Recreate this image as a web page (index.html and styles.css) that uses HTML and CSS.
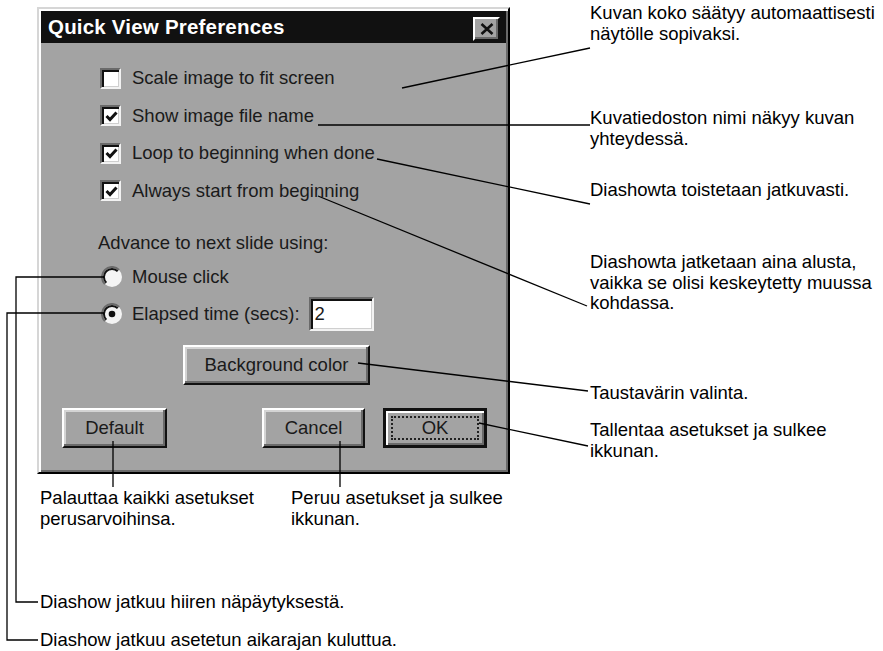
FILE: index.html
```html
<!DOCTYPE html>
<html lang="fi">

<head>
    <meta charset="UTF-8">
    <meta name="viewport" content="width=device-width, initial-scale=1.0">
    <title>Quick View Preferences</title>
    <link rel="stylesheet" href="styles.css">
</head>

<body>
    <div class="sheet">
        <div class="top">
            <div class="dialog">
                <div class="titlebar">
                    <span class="title">Quick View Preferences</span>
                    <span class="close">
                        <svg width="14" height="12" viewBox="0 0 14 12">
                            <path d="M1.5 1 L12.5 11 M12.5 1 L1.5 11" stroke="#111" stroke-width="2.6" fill="none" />
                        </svg>
                    </span>
                </div>

                <div class="panel">
                    <div class="checks">
                        <div class="row"><span class="box"></span>Scale image to fit screen</div>
                        <div class="row"><span class="box checked"><svg width="15" height="15" viewBox="0 0 15 15"><path d="M2.5 7 L6 10.5 L12.5 3.5" stroke="#111" stroke-width="3" fill="none" /></svg></span>Show image file name</div>
                        <div class="row"><span class="box checked"><svg width="15" height="15" viewBox="0 0 15 15"><path d="M2.5 7 L6 10.5 L12.5 3.5" stroke="#111" stroke-width="3" fill="none" /></svg></span>Loop to beginning when done</div>
                        <div class="row"><span class="box checked"><svg width="15" height="15" viewBox="0 0 15 15"><path d="M2.5 7 L6 10.5 L12.5 3.5" stroke="#111" stroke-width="3" fill="none" /></svg></span>Always start from beginning</div>
                    </div>

                    <p class="advance">Advance to next slide using:</p>

                    <div class="radios">
                        <div class="row">
                            <svg class="radio" width="22" height="22" viewBox="0 0 22 22">
                                <circle cx="11" cy="11" r="10" fill="#f4f4f4" />
                                <path d="M3.9 18.1 A10 10 0 0 1 18.1 3.9" stroke="#6a6a6a" stroke-width="2" fill="none" />
                                <path d="M5.3 16.7 A8 8 0 0 1 16.7 5.3" stroke="#111" stroke-width="2" fill="none" />
                            </svg>
                            Mouse click
                        </div>
                        <div class="row tall">
                            <svg class="radio" width="22" height="22" viewBox="0 0 22 22">
                                <circle cx="11" cy="11" r="10" fill="#f4f4f4" />
                                <path d="M3.9 18.1 A10 10 0 0 1 18.1 3.9" stroke="#6a6a6a" stroke-width="2" fill="none" />
                                <path d="M5.3 16.7 A8 8 0 0 1 16.7 5.3" stroke="#111" stroke-width="2" fill="none" />
                                <circle cx="11" cy="11" r="3.3" fill="#111" />
                            </svg>
                            Elapsed time (secs):
                            <span class="field">2</span>
                        </div>
                    </div>

                    <div class="btn bg-btn">Background color</div>

                    <div class="buttons">
                        <div class="btn default">Default</div>
                        <div class="btn cancel">Cancel</div>
                        <div class="btn ok"><span class="focus">OK</span></div>
                    </div>
                </div>
            </div>

            <div class="notes">
                <p class="note n1">Kuvan koko säätyy automaattisesti<br>näytölle sopivaksi.</p>
                <p class="note n2">Kuvatiedoston nimi näkyy kuvan<br>yhteydessä.</p>
                <p class="note n3">Diashowta toistetaan jatkuvasti.</p>
                <p class="note n4">Diashowta jatketaan aina alusta,<br>vaikka se olisi keskeytetty muussa<br>kohdassa.</p>
                <p class="note n5">Taustavärin valinta.</p>
                <p class="note n6">Tallentaa asetukset ja sulkee<br>ikkunan.</p>
            </div>
        </div>

        <div class="under">
            <p class="note reset-note">Palauttaa kaikki asetukset<br>perusarvoihinsa.</p>
            <p class="note">Peruu asetukset ja sulkee<br>ikkunan.</p>
        </div>

        <div class="foot">
            <p class="note">Diashow jatkuu hiiren näpäytyksestä.</p>
            <p class="note last">Diashow jatkuu asetetun aikarajan kuluttua.</p>
        </div>

        <!-- callout lines -->
        <svg class="leaders" width="883" height="651" viewBox="0 0 883 651">
            <path d="M402 88 L590 48" />
            <path d="M318 125 H590" />
            <path d="M377 159 L590 204" />
            <path d="M318 196 L587 306" />
            <path d="M358 363 L588 391" />
            <path d="M479 423 L588 446" />
            <path d="M113 441 V487" />
            <path d="M340 441 V487" />
            <path d="M104 277 H16 V602 H38" />
            <path d="M104 313 H7 V640 H38" />
        </svg>
    </div>
</body>

</html>
```

FILE: styles.css
```css
* {
    box-sizing: border-box;
    margin: 0;
    padding: 0;
}

body {
    background-color: #fff;
    font-family: "Liberation Sans", Arial, sans-serif;
    color: #111;
}

.sheet {
    position: relative;
    width: 883px;
    height: 651px;
    overflow: hidden;
}

.top {
    display: flex;
    align-items: flex-start;
}

/* the dialog window */
.dialog {
    display: flex;
    flex-direction: column;
    width: 473px;
    height: 467px;
    margin: 7px 0 0 37px;
    padding: 2px;
    background-color: #a3a3a3;
    border: 2px solid;
    border-color: #d6d6d6 #000 #000 #d6d6d6;
    box-shadow: inset 2px 2px 0 #fff, inset -2px -2px 0 #6a6a6a;
}

.titlebar {
    display: flex;
    align-items: center;
    justify-content: space-between;
    height: 32px;
    padding: 0 6px 0 7px;
    background-color: #111;
}

.title {
    color: #fff;
    font-weight: bold;
    font-size: 20.5px;
    letter-spacing: 0.2px;
}

.close {
    display: flex;
    align-items: center;
    justify-content: center;
    width: 27px;
    height: 24px;
    margin-top: 4px;
    background-color: #a3a3a3;
    border: 2px solid;
    border-color: #fff #111 #111 #fff;
    box-shadow: inset -2px -2px 0 #6a6a6a;
}

.panel {
    flex: 1;
    display: flex;
    flex-direction: column;
    padding-top: 23px;
    font-size: 18.5px;
    color: #1a1a1a;
}

.row {
    display: flex;
    align-items: center;
    height: 24px;
    white-space: nowrap;
}

.checks {
    display: flex;
    flex-direction: column;
    gap: 13.5px;
    padding-left: 59px;
}

.box {
    display: flex;
    align-items: center;
    justify-content: center;
    width: 21px;
    height: 21px;
    margin-right: 11px;
    background-color: #fff;
    border: 2px solid;
    border-color: #6a6a6a #f2f2f2 #f2f2f2 #6a6a6a;
    box-shadow: inset 2px 2px 0 #111, inset -1px -1px 0 #cfcfcf;
}

.box svg {
    margin: 1px 0 0 1px;
}

.advance {
    margin-top: 29.5px;
    padding-left: 57px;
    line-height: 22px;
}

.radios {
    display: flex;
    flex-direction: column;
    gap: 8px;
    margin-top: 11px;
    padding-left: 60px;
}

.radio {
    margin-right: 9px;
}

.row.tall {
    height: 34px;
}

.field {
    width: 65px;
    height: 34px;
    margin-left: 9px;
    padding: 4px 0 0 4px;
    background-color: #fff;
    border: 2px solid;
    border-color: #6a6a6a #f2f2f2 #f2f2f2 #6a6a6a;
    box-shadow: inset 2px 2px 0 #111, inset -1px -1px 0 #cfcfcf;
    line-height: 22px;
}

.btn {
    display: flex;
    align-items: center;
    justify-content: center;
    height: 40px;
    background-color: #a3a3a3;
    border: 2px solid;
    border-color: #fff #111 #111 #fff;
    box-shadow: inset -2px -2px 0 #6a6a6a, inset 2px 2px 0 #d4d4d4;
}

.bg-btn {
    width: 187px;
    margin: 14px 0 0 142px;
}

.buttons {
    display: flex;
    margin-top: 23px;
    padding: 0 19px 0 21px;
}

.default {
    width: 105px;
}

.cancel {
    width: 103px;
    margin-left: auto;
}

.ok {
    width: 104px;
    margin-left: 18px;
    border-color: #111;
    border-width: 3px;
    box-shadow: inset 2px 2px 0 #fff, inset -2px -2px 0 #6a6a6a;
    padding: 5px;
}

.focus {
    display: flex;
    align-items: center;
    justify-content: center;
    width: 100%;
    height: 100%;
    border: 2px dotted #222;
}

/* callout texts */
.notes {
    display: flex;
    flex-direction: column;
    margin-left: 80px;
}

.note {
    font-size: 18.5px;
    line-height: 20.5px;
    white-space: nowrap;
    color: #000;
}

.n1 {
    margin-top: 3px;
}

.n2 {
    margin-top: 64px;
}

.n3 {
    margin-top: 31px;
}

.n4 {
    margin-top: 51.5px;
}

.n5 {
    margin-top: 69.5px;
}

.n6 {
    margin-top: 16.5px;
}

.under {
    display: flex;
    margin-top: 14px;
    padding-left: 40px;
}

.reset-note {
    width: 251px;
}

.foot {
    display: flex;
    flex-direction: column;
    margin-top: 63px;
    padding-left: 40px;
}

.foot .last {
    margin-top: 17.5px;
}

.leaders {
    position: absolute;
    top: 0;
    left: 0;
    pointer-events: none;
}

.leaders path {
    fill: none;
    stroke: #000;
    stroke-width: 1.3;
}
```
